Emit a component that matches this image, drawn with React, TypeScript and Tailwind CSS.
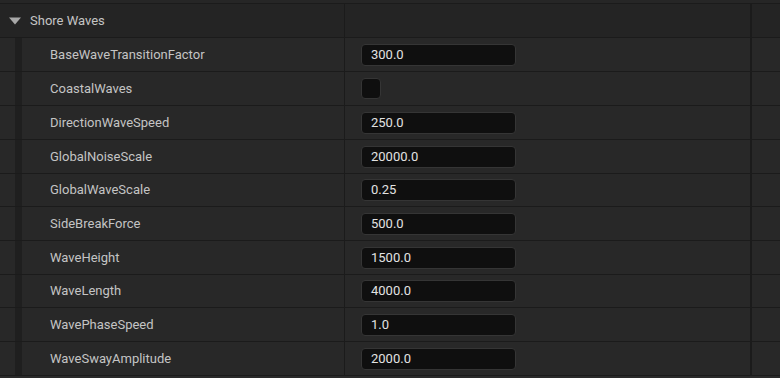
const rows: { label: string; value?: string; h: number }[] = [
  { label: "BaseWaveTransitionFactor", value: "300.0", h: 33 },
  { label: "CoastalWaves", h: 33 },
  { label: "DirectionWaveSpeed", value: "250.0", h: 33 },
  { label: "GlobalNoiseScale", value: "20000.0", h: 33 },
  { label: "GlobalWaveScale", value: "0.25", h: 32 },
  { label: "SideBreakForce", value: "500.0", h: 33 },
  { label: "WaveHeight", value: "1500.0", h: 33 },
  { label: "WaveLength", value: "4000.0", h: 32 },
  { label: "WavePhaseSpeed", value: "1.0", h: 33 },
  { label: "WaveSwayAmplitude", value: "2000.0", h: 33 },
];

function Row({ label, value, h }: { label: string; value?: string; h: number }) {
  return (
    <div className="flex border-b border-[#1b1b1b] bg-[#282828]" style={{ height: h + 1 }}>
      <div className="flex w-[344px] shrink-0 items-center">
        <div className="w-[15px] self-stretch" />
        <div className="w-[7px] self-stretch bg-[#1f1f1f]" />
        <span className="pl-[28px] text-[13px] text-[#c4c4c4]">{label}</span>
      </div>
      <div className="w-px bg-[#1b1b1b]" />
      <div className="flex w-[405px] shrink-0 items-center pl-[16px]">
        {value !== undefined ? (
          <div className="flex h-[22px] w-[155px] items-center rounded-[4px] border border-[#353535] bg-[#0f0f0f] pl-[9px] text-[13px] text-[#e2e2e2]">
            {value}
          </div>
        ) : (
          <div className="h-[21px] w-[20px] rounded-[4px] border border-[#353535] bg-[#0f0f0f]" />
        )}
      </div>
      <div className="w-[2px] bg-[#1b1b1b]" />
      <div className="flex-1" />
    </div>
  );
}

export default function App() {
  return (
    <div
      className="h-[378px] w-[780px] overflow-hidden bg-[#2a2a2a]"
      style={{ fontFamily: "Roboto, 'Liberation Sans', sans-serif" }}
    >
      <div className="h-[3px] bg-[#262626]" />
      <div className="h-px bg-[#1b1b1b]" />
      <div className="flex h-[34px] border-b border-[#1b1b1b] bg-[#242424]">
        <div className="flex w-[344px] shrink-0 items-center">
          <svg width="12" height="8" viewBox="0 0 12 8" className="ml-[9px]">
            <path d="M0 0.5 H12 L6 7.5 Z" fill="#a8a8a8" />
          </svg>
          <span className="pl-[9px] text-[13px] text-[#c4c4c4]">Shore Waves</span>
        </div>
        <div className="w-px bg-[#1b1b1b]" />
        <div className="w-[405px] shrink-0" />
        <div className="w-[2px] bg-[#1b1b1b]" />
        <div className="flex-1" />
      </div>
      {rows.map((r) => (
        <Row key={r.label} {...r} />
      ))}
    </div>
  );
}
